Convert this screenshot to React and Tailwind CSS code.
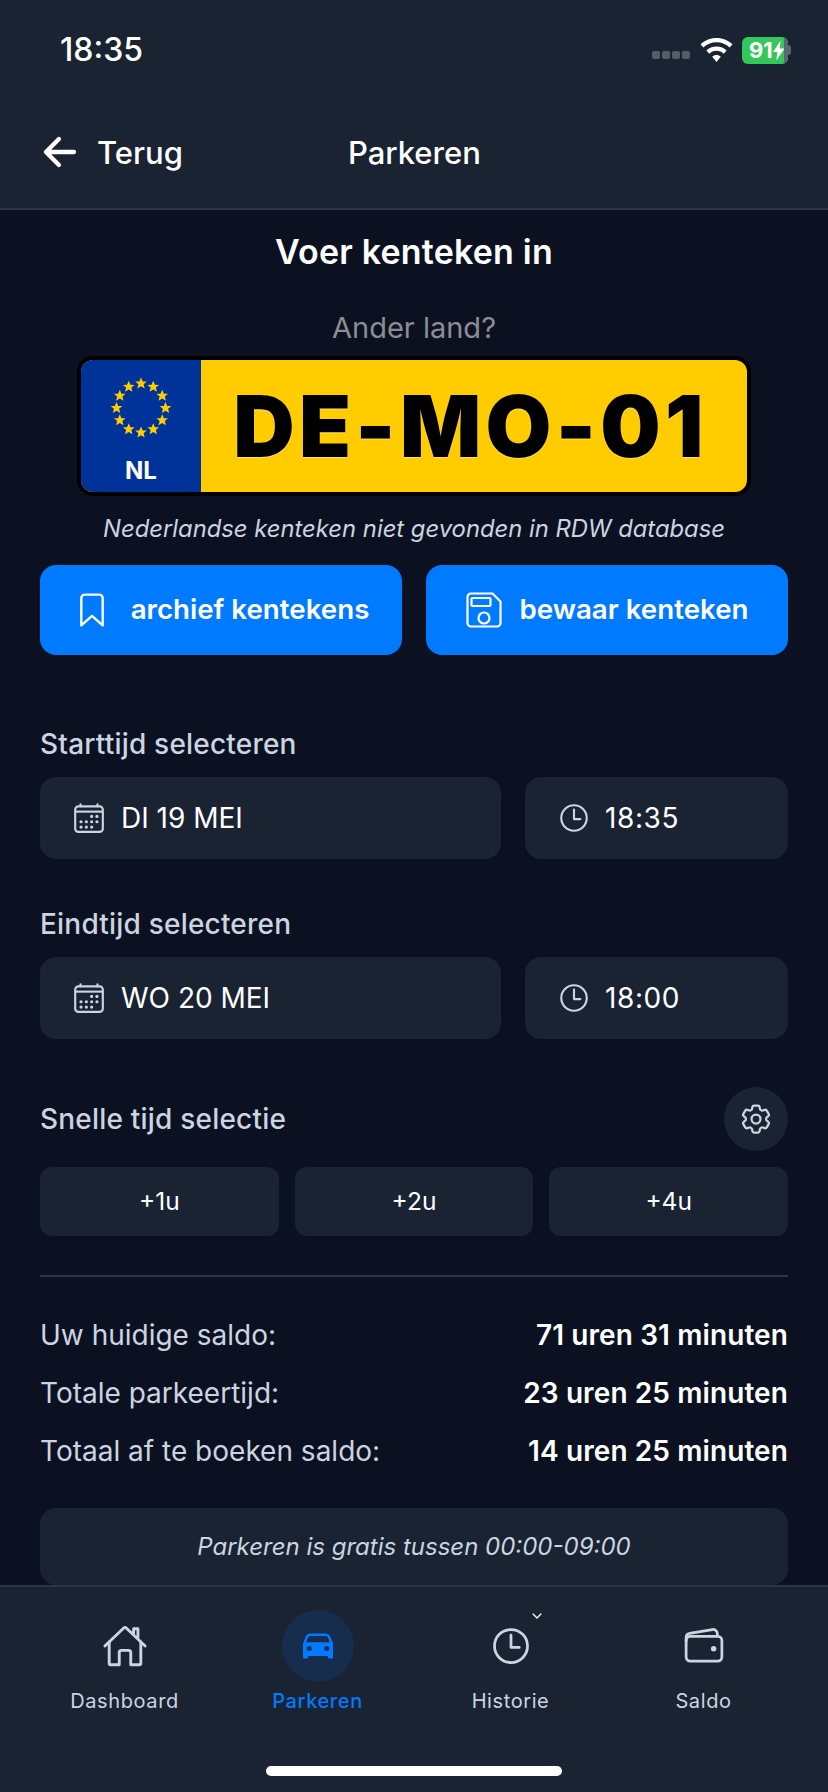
import { IoArrowBackOutline, IoBookmarkOutline, IoCalendarOutline, IoCar, IoHomeOutline, IoTimeOutline, IoWalletOutline, IoChevronDown } from "react-icons/io5";
import { HiOutlineCog6Tooth } from "react-icons/hi2";

const STARS = Array.from({ length: 12 }, (_, i) => i);

function EuStars() {
  return (
    <svg width="62" height="62" viewBox="-31 -31 62 62">
      {STARS.map((i) => (
        <polygon
          key={i}
          transform={`rotate(${i * 30}) translate(0 -24.500) rotate(${-i * 30})`}
          points="0,-6 1.700,-2 5.800,-1.900 2.600,0.800 3.700,5 0,2.700 -3.700,5 -2.600,0.800 -5.800,-1.900 -1.700,-2"
          fill="#ffcc00"
        />
      ))}
    </svg>
  );
}

function SaveIcon() {
  return (
    <svg width="36" height="36" viewBox="0 0 36 36" fill="none" stroke="white" strokeWidth="2.200" strokeLinejoin="round">
      <path d="M1.500 5A3.500 3.500 0 0 1 5 1.500h21.500L34.500 9.500V31a3.500 3.500 0 0 1-3.500 3.500H5A3.500 3.500 0 0 1 1.500 31z" />
      <rect x="5.500" y="6" width="19" height="8" rx="1" />
      <circle cx="18" cy="26" r="5.500" />
    </svg>
  );
}

function Wifi() {
  return (
    <svg width="33" height="25" viewBox="0 0 33 25" fill="white">
      <path d="M16.500 0C10 0 4.500 2.500 0.500 6.300L3.400 9.500C6.700 6.300 11.300 4.300 16.500 4.300S26.300 6.300 29.600 9.500L32.500 6.300C28.500 2.500 23 0 16.500 0Z" />
      <path d="M16.500 8.500C12.500 8.500 9 10 6.400 12.500L9.300 15.700C11.200 13.900 13.700 12.800 16.500 12.800S21.800 13.900 23.700 15.700L26.600 12.500C24 10 20.500 8.500 16.500 8.500Z" />
      <path d="M16.500 17C14.800 17 13.300 17.600 12.200 18.700L16.500 24L20.800 18.700C19.700 17.600 18.200 17 16.500 17Z" />
    </svg>
  );
}

function Battery() {
  return (
    <div className="flex items-center">
      <div className="flex h-[27px] w-[46px] items-center overflow-hidden rounded-[6px] bg-[#34c759]">
        <span className="pl-[7px] text-[22px] leading-none font-bold text-white">91</span>
        <svg width="12" height="21" viewBox="0 0 12 21" fill="white">
          <path d="M8 0 0 12h4.500L3.500 21 12 8.500H7z" />
        </svg>
        <div className="ml-auto h-full w-[4px] bg-[#5f6570]" />
      </div>
      <div className="h-[10px] w-[3px] rounded-r-full bg-[#5f6570]" />
    </div>
  );
}

function DateRow({ label, date, time }) {
  return (
    <section>
      <h3 className="text-[28px] leading-[33px] font-medium tracking-[0.2px] text-[#cbd5e1]">{label}</h3>
      <div className="mt-[16px] flex gap-6">
        <div className="flex h-[82px] flex-1 items-center rounded-2xl bg-[#1a2332] pl-[32px]">
          <IoCalendarOutline className="mr-[15px] text-[34px] text-[#cbd5e1]" />
          <span className="text-[28px] leading-none text-white">{date}</span>
        </div>
        <div className="flex h-[82px] w-[263px] items-center rounded-2xl bg-[#1a2332] pl-[32px]">
          <IoTimeOutline className="mr-[14px] text-[34px] text-[#cbd5e1]" />
          <span className="text-[28px] leading-none tracking-[0.6px] text-white">{time}</span>
        </div>
      </div>
    </section>
  );
}

function SaldoRow({ label, value }) {
  return (
    <div className="flex h-[58px] items-center justify-between text-[28px] leading-none">
      <span className="text-[#cbd5e1]">{label}</span>
      <span className="font-semibold tracking-[0.1px] text-white">{value}</span>
    </div>
  );
}

function NavItem({ icon, label, active, chevron }) {
  return (
    <div className="flex flex-col items-center">
      <div className={`relative flex h-[72px] w-[72px] items-center justify-center rounded-full ${active ? "bg-[#162d4d]" : ""}`}>
        {icon}
        {chevron && <IoChevronDown className="absolute top-[-1px] right-[3px] text-[14px] text-white" />}
      </div>
      <span className={`mt-[5px] text-[20px] leading-[28px] tracking-[0.6px] ${active ? "font-medium text-[#007aff]" : "text-[#cbd5e1]"}`}>{label}</span>
    </div>
  );
}

export default function App() {
  return (
    <div className="flex h-[1792px] w-[828px] flex-col overflow-hidden bg-[#0b1120] font-['Inter',sans-serif] text-white">
      {/* Header */}
      <header className="shrink-0 border-b-2 border-[#2c3644] bg-[#1a2332]">
        <div className="flex h-[100px] items-center justify-between pr-[37px] pl-[60px]">
          <span className="text-[32px] leading-none font-medium">18:35</span>
          <div className="flex items-center">
            <div className="mt-[9px] mr-[10px] flex gap-[2px]">
              <div className="h-[8px] w-[8px] rounded-[2px] bg-[#555c68]" />
              <div className="h-[8px] w-[8px] rounded-[2px] bg-[#555c68]" />
              <div className="h-[8px] w-[8px] rounded-[2px] bg-[#555c68]" />
              <div className="h-[8px] w-[8px] rounded-[2px] bg-[#555c68]" />
            </div>
            <Wifi />
            <div className="ml-[9px]">
              <Battery />
            </div>
          </div>
        </div>
        <div className="flex h-[108px] items-center pb-[4px] pl-[37px]">
          <IoArrowBackOutline className="text-[46px] text-white" />
          <span className="ml-[14px] text-[31px] leading-none font-medium">Terug</span>
          <span className="ml-[165px] text-[31px] leading-none font-medium">Parkeren</span>
        </div>
      </header>

      {/* Content */}
      <main className="flex-1 overflow-hidden px-10">
        <h1 className="mt-[20px] text-center text-[34px] leading-[44px] font-semibold tracking-[0.2px]">Voer kenteken in</h1>
        <p className="mt-[37px] text-center text-[29px] leading-[33px] text-[#8a8d94]">Ander land?</p>

        {/* Plate */}
        <div className="mx-auto mt-[12px] flex h-[140px] w-[674px] overflow-hidden rounded-[16px] border-4 border-black bg-[#ffcc00]">
          <div className="flex w-[120px] shrink-0 flex-col items-center bg-[#003399] pt-[17px]">
            <EuStars />
            <span className="mt-[20px] text-[24px] leading-none font-bold">NL</span>
          </div>
          <div className="flex flex-1 items-center justify-center pr-[7px] text-[85px] leading-none font-black tracking-[4.300px] text-black [text-shadow:0_1px_1px_rgba(255,255,255,0.4)]">
            DE-MO-01
          </div>
        </div>

        <p className="mt-[19px] text-center text-[23.800px] leading-[28px] text-[#cbd5e1] italic">Nederlandse kenteken niet gevonden in RDW database</p>

        <div className="mt-[22px] flex gap-6">
          <button className="flex h-[90px] flex-1 items-center justify-center rounded-2xl bg-[#007aff]">
            <IoBookmarkOutline className="mr-[20px] text-[38px]" />
            <span className="text-[27.700px] font-semibold">archief kentekens</span>
          </button>
          <button className="flex h-[90px] flex-1 items-center justify-center rounded-2xl bg-[#007aff]">
            <SaveIcon />
            <span className="ml-[18px] text-[27.700px] font-semibold">bewaar kenteken</span>
          </button>
        </div>

        <div className="mt-[73px]">
          <DateRow label="Starttijd selecteren" date="DI 19 MEI" time="18:35" />
        </div>
        <div className="mt-[49px]">
          <DateRow label="Eindtijd selecteren" date="WO 20 MEI" time="18:00" />
        </div>

        <div className="mt-[48px] flex items-center justify-between">
          <h3 className="text-[28px] leading-[33px] font-medium tracking-[0.2px] text-[#cbd5e1]">Snelle tijd selectie</h3>
          <div className="flex h-[64px] w-[64px] items-center justify-center rounded-full bg-[#1a2332]">
            <HiOutlineCog6Tooth className="text-[36px] text-[#cbd5e1]" />
          </div>
        </div>

        <div className="mt-[16px] flex gap-4">
          {["+1u", "+2u", "+4u"].map((t) => (
            <div key={t} className="flex h-[69px] flex-1 items-center justify-center rounded-xl bg-[#1a2332] text-[24.500px]">{t}</div>
          ))}
        </div>

        <div className="mt-[39px] h-[2px] bg-[#2c3644]" />

        <div className="mt-[29px]">
          <SaldoRow label="Uw huidige saldo:" value="71 uren 31 minuten" />
          <SaldoRow label="Totale parkeertijd:" value="23 uren 25 minuten" />
          <SaldoRow label="Totaal af te boeken saldo:" value="14 uren 25 minuten" />
        </div>

        <div className="mt-[28px] flex h-[77px] items-center justify-center rounded-2xl bg-[#1a2332] text-[24px] text-[#cbd5e1] italic">
          Parkeren is gratis tussen 00:00-09:00
        </div>
      </main>

      {/* Tab bar */}
      <nav className="h-[207px] shrink-0 border-t-2 border-[#2c3644] bg-[#1a2332]">
        <div className="grid grid-cols-4 px-7 pt-[23px]">
          <NavItem label="Dashboard" icon={<IoHomeOutline className="text-[46px] text-[#cbd5e1]" />} />
          <NavItem active label="Parkeren" icon={<IoCar className="text-[40px] text-[#007aff]" />} />
          <NavItem chevron label="Historie" icon={<IoTimeOutline className="text-[44px] text-[#cbd5e1]" />} />
          <NavItem label="Saldo" icon={<IoWalletOutline className="text-[44px] text-[#cbd5e1]" />} />
        </div>
        <div className="mx-auto mt-[51px] h-[10px] w-[296px] rounded-full bg-white" />
      </nav>
    </div>
  );
}
